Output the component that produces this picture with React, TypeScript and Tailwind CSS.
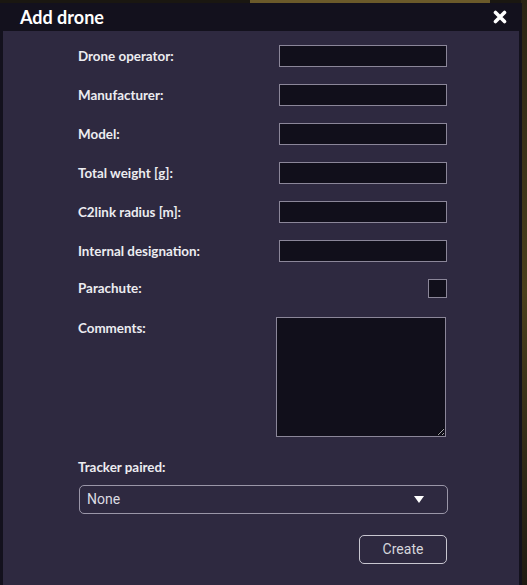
const fields = [
  "Drone operator:",
  "Manufacturer:",
  "Model:",
  "Total weight [g]:",
  "C2link radius [m]:",
  "Internal designation:",
];

export default function App() {
  return (
    <div className="w-[527px] h-[585px] bg-[#1a1711] relative overflow-hidden font-['Lato',sans-serif]">
      {/* map peeking out behind the dialog */}
      <div className="absolute left-[250px] top-0 w-[240px] h-[4px] bg-[#6b5a2a]" />
      <div className="absolute right-0 top-0 w-[6px] h-[585px] bg-gradient-to-b from-[#2a2414] via-[#4a3f1c] to-[#1f1b12]" />

      <div className="absolute left-0 top-[3px] w-[522px] h-[582px] bg-[#13111d] flex flex-col px-[3px]">
        <div className="h-[28px] flex items-center justify-between pl-[17px] pr-[12px]">
          <span className="text-white font-bold text-[18px] leading-none">Add drone</span>
          <svg width="14" height="14" viewBox="0 0 14 14">
            <path d="M2.5 2.5 L11.5 11.5 M11.5 2.5 L2.5 11.5" stroke="white" strokeWidth="3.6" strokeLinecap="round" />
          </svg>
        </div>

        <div className="flex-1 bg-[#2e2940] pl-[75px] pr-[72px] pt-[14px] text-[13.4px] text-[#ececf0] font-bold">
          <div className="flex flex-col gap-[17px]">
            {fields.map((f) => (
              <div key={f} className="flex items-center justify-between h-[22px]">
                <label>{f}</label>
                <input
                  type="text"
                  className="w-[168px] h-[22px] bg-[#110f1b] border border-[#8b8699] outline-none"
                />
              </div>
            ))}
            <div className="flex items-center justify-between h-[18px]">
              <label>Parachute:</label>
              <div className="w-[19px] h-[19px] bg-[#110f1b] border border-[#8b8699]" />
            </div>
          </div>

          <div className="flex justify-between mt-[20px]">
            <label className="pt-[1px]">Comments:</label>
            <textarea className="w-[170px] h-[120px] bg-[#110f1b] border border-[#8b8699] outline-none mr-[1px]" />
          </div>

          <div className="mt-[20px]">
            <label>Tracker paired:</label>
          </div>
          <div className="mt-[8px] ml-[1px] mr-[-1px] h-[29px] rounded-[5px] border border-[#9a96a8] flex items-center justify-between pl-[7px] pr-[23px] font-['Roboto',sans-serif] font-normal text-[14px] text-[#dcdce2]">
            <span>None</span>
            <svg width="10" height="7" viewBox="0 0 10 7">
              <path d="M0 0 H10 L5 7 Z" fill="white" />
            </svg>
          </div>

          <div className="flex justify-end mt-[21px]">
            <button className="w-[88px] h-[29px] rounded-[5px] border border-[#c8c6d0] font-['Roboto',sans-serif] font-normal text-[14px] text-[#d6d6dc]">
              Create
            </button>
          </div>
        </div>
      </div>
    </div>
  );
}
